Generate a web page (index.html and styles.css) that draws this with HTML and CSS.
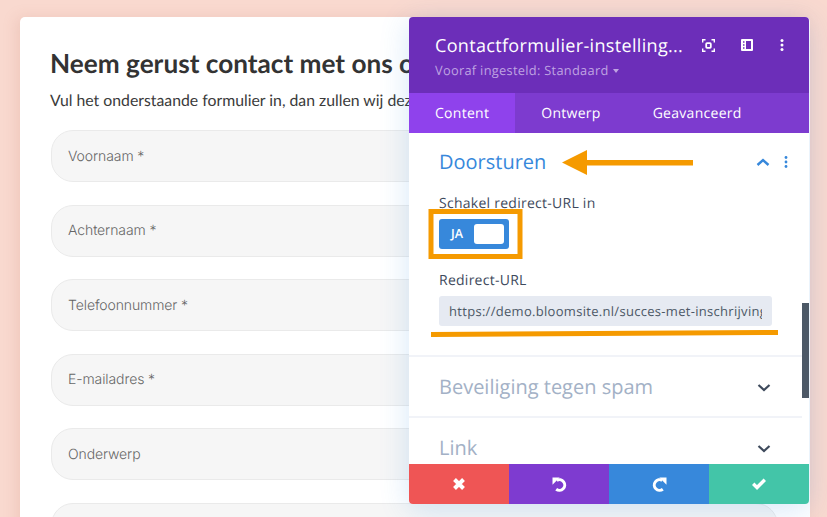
FILE: index.html
```html
<!DOCTYPE html>
<html lang="nl">
<head>
<meta charset="utf-8">
<title>Contactformulier</title>
<link rel="stylesheet" href="styles.css">
</head>
<body>
<main class="card">
  <h1 class="title">Neem gerust contact met ons op</h1>
  <p class="intro">Vul het onderstaande formulier in, dan zullen wij deze zo snel mogelijk beantwoorden.</p>
  <div class="field">Voornaam *</div>
  <div class="field">Achternaam *</div>
  <div class="field">Telefoonnummer *</div>
  <div class="field">E-mailadres *</div>
  <div class="field">Onderwerp</div>
  <div class="field"></div>
</main>

<aside class="panel">
  <header class="panel-head">
    <div class="head-text">
      <div class="head-title">Contactformulier-instelling...</div>
      <div class="head-sub">Vooraf ingesteld: Standaard <span class="caret"></span></div>
    </div>
    <div class="head-icons">
      <svg class="ico" width="13" height="13" viewBox="0 0 13 13" fill="none" stroke="#fff" stroke-width="1.4"><path d="M.7 3.500V.7h2.800M9.500.7h2.800v2.800M12.300 9.500v2.800H9.500M3.500 12.300H.7V9.500"/><rect x="4.200" y="4.200" width="4.600" height="4.600" rx=".8" stroke-width="1.800"/></svg>
      <svg class="ico" width="12" height="12" viewBox="0 0 12 12"><path fill="#fff" fill-rule="evenodd" d="M1 0h10a1 1 0 0 1 1 1v10a1 1 0 0 1-1 1H1a1 1 0 0 1-1-1V1a1 1 0 0 1 1-1zM5 2v8h5V2zM2 2.200v1.600h1.500V2.200zm0 3v1.600h1.500V5.200zm0 3v1.600h1.500V8.200z"/></svg>
      <svg class="ico" width="4" height="12" viewBox="0 0 4 12" fill="#fff"><circle cx="2" cy="1.500" r="1.500"/><circle cx="2" cy="6" r="1.500"/><circle cx="2" cy="10.500" r="1.500"/></svg>
    </div>
  </header>
  <nav class="tabs">
    <div class="tab tab-active">Content</div>
    <div class="tab">Ontwerp</div>
    <div class="tab">Geavanceerd</div>
  </nav>
  <div class="panel-body">
    <section class="section section-open">
      <div class="section-head">
        <h2 class="section-title title-active">Doorsturen</h2>
        <svg class="chev" width="14" height="14" viewBox="0 0 14 14" fill="none" stroke="#3788db" stroke-width="2.400"><path d="M1.500 10 7 5l5.500 5"/></svg>
        <svg class="dots" width="4" height="12" viewBox="0 0 4 12" fill="#3788db"><circle cx="2" cy="1.500" r="1.400"/><circle cx="2" cy="6" r="1.400"/><circle cx="2" cy="10.500" r="1.400"/></svg>
      </div>
      <div class="label label-first">Schakel redirect-URL in</div>
      <div class="toggle"><span class="toggle-text">JA</span><span class="knob"></span></div>
      <div class="label label-second">Redirect-URL</div>
      <div class="url"><span class="url-text">https://demo.bloomsite.nl/succes-met-inschrijving</span></div>
    </section>
    <section class="section">
      <div class="section-head">
        <h2 class="section-title">Beveiliging tegen spam</h2>
        <svg class="chev chev-down" width="14" height="14" viewBox="0 0 14 14" fill="none" stroke="#3e4a5c" stroke-width="2.200"><path d="M1.500 5 7 10l5.500-5"/></svg>
      </div>
    </section>
    <section class="section section-last">
      <div class="section-head">
        <h2 class="section-title">Link</h2>
        <svg class="chev chev-down" width="14" height="14" viewBox="0 0 14 14" fill="none" stroke="#3e4a5c" stroke-width="2.200"><path d="M1.500 5 7 10l5.500-5"/></svg>
      </div>
    </section>
    <div class="scrollbar"></div>
  </div>
  <footer class="actions">
    <div class="action act-red"><svg width="12" height="12" viewBox="0 0 12 12" fill="none" stroke="#fff" stroke-width="4"><path d="M1.500 1.500l9 9M10.500 1.500l-9 9"/></svg></div>
    <div class="action act-purple"><svg width="15" height="15" viewBox="0 0 15 15" fill="none"><path d="M4.800 3.400A5.300 5.300 0 1 1 4.200 12.200" stroke="#fff" stroke-width="3"/><path fill="#fff" d="M.5.500h7.200L.5 7.800z"/></svg></div>
    <div class="action act-blue"><svg width="15" height="15" viewBox="0 0 15 15" fill="none"><path d="M10.200 3.400A5.300 5.300 0 1 0 10.800 12.200" stroke="#fff" stroke-width="3"/><path fill="#fff" d="M14.500.500H7.300L14.500 7.800z"/></svg></div>
    <div class="action act-green"><svg width="14" height="12" viewBox="0 0 14 12" fill="none" stroke="#fff" stroke-width="3.400"><path d="M1.200 5.800 5 9.500l7.800-7.800"/></svg></div>
  </footer>
</aside>

<svg class="notes" width="827" height="517" viewBox="0 0 827 517" fill="none">
  <path fill="#f59a00" d="M562 162.500 587 150v10h106v5.500H587V175z"/>
  <rect x="431" y="211.500" width="89" height="45" stroke="#f59a00" stroke-width="5"/>
  <path d="M431 334.500 778 332.500" stroke="#f59a00" stroke-width="5"/>
</svg>
</body>
</html>
```

FILE: styles.css
```css
* { box-sizing: border-box; }
html, body { margin: 0; height: 100%; }
body {
  width: 827px;
  height: 517px;
  overflow: hidden;
  background: #f9d9cf;
  padding: 17px 0 0 20px;
  position: relative;
  text-rendering: geometricPrecision;
}

.card {
  width: 790px;
  height: 520px;
  background: #fff;
  border-radius: 5px 5px 0 0;
  padding: 28px 31px;
  box-shadow: -4px 0 14px rgba(200, 130, 110, 0.18);
  overflow: hidden;
}
.title {
  margin: 0 0 0 -1px;
  font: 700 26.2px/36px Lato, sans-serif;
  color: #333;
  white-space: nowrap;
}
.intro {
  margin: 7px 0 16px -1px;
  font: 400 15.8px/26px Lato, sans-serif;
  color: #3b3b3b;
  white-space: nowrap;
}
.field {
  height: 52px;
  width: 727px;
  margin-bottom: 22.6px;
  padding: 1px 0 0 16px;
  display: flex;
  align-items: center;
  background: #f6f6f6;
  border: 1px solid #eaeaea;
  border-radius: 22px;
  font: 300 14px/20px Inter, sans-serif;
  color: #666;
  letter-spacing: -0.1px;
}

.panel {
  position: absolute;
  left: 409px;
  top: 17px;
  width: 400px;
  height: 487px;
  display: flex;
  flex-direction: column;
  border-radius: 4px;
  overflow: hidden;
  background: #fff;
  box-shadow: 0 5px 30px rgba(43, 135, 218, 0.2);
  font-family: "Open Sans", sans-serif;
}
.panel-head {
  height: 76px;
  flex: none;
  background: #6c2eb9;
  padding: 16px 25.5px 0 26px;
  display: flex;
  justify-content: space-between;
}
.head-title {
  font-size: 18px;
  line-height: 26px;
  font-weight: 500;
  letter-spacing: 0.33px;
  color: #fff;
  white-space: nowrap;
}
.head-sub {
  margin-top: 2px;
  font-size: 12.8px;
  line-height: 18px;
  font-weight: 500;
  letter-spacing: 0.3px;
  color: #bfa3e2;
  white-space: nowrap;
}
.caret {
  display: inline-block;
  margin-left: 1px;
  vertical-align: 2px;
  border: 3px solid transparent;
  border-top: 4px solid #bfa3e2;
  border-bottom: 0;
}
.head-icons {
  display: flex;
  gap: 26.5px;
  padding-top: 6px;
  align-items: flex-start;
}
.ico { display: block; }

.tabs {
  height: 40px;
  flex: none;
  display: flex;
  background: #7d3bcf;
  color: #fff;
  font-size: 14px;
  font-weight: 500;
  letter-spacing: 0.28px;
}
.tab {
  padding: 0 26px;
  display: flex;
  align-items: center;
}
.tab-active { background: #8f42ec; }

.panel-body {
  flex: 1;
  min-height: 0;
  overflow: hidden;
  position: relative;
  padding-right: 7px;
}
.section {
  height: 61px;
  padding: 0 12px 0 30px;
  border-bottom: 2px solid #f1f3f8;
}
.section-open { height: 224px; }
.section-last { border-bottom: 0; }
.section-head {
  height: 60px;
  display: flex;
  align-items: center;
}
.section-open .section-head { height: 58px; }
.section-title {
  margin: 0;
  flex: 1;
  font-size: 20px;
  line-height: 28px;
  font-weight: 400;
  color: #a3b1c6;
}
.title-active { color: #3788db; }
.chev { display: block; margin-right: 6px; }
.chev-down { margin-right: 19px; }
.dots { display: block; margin-left: 8px; margin-right: 2px; }

.label {
  font-size: 14px;
  line-height: 20px;
  font-weight: 500;
  letter-spacing: 0.26px;
  color: #3e4a5c;
}
.label-first { margin-top: 3px; }
.label-second { margin-top: 22px; }
.toggle {
  margin-top: 5px;
  width: 70px;
  height: 30px;
  background: #3788db;
  border-radius: 3px;
  display: flex;
  align-items: center;
  justify-content: space-between;
  padding: 0 5px 0 12px;
}
.toggle-text {
  font-size: 12.5px;
  line-height: 16px;
  margin-top: -1px;
  font-weight: 600;
  color: #fff;
}
.knob {
  width: 30px;
  height: 20px;
  background: #fff;
  border-radius: 3px;
}
.url {
  margin-top: 5px;
  width: 333px;
  height: 30px;
  padding: 0 10px;
  background: #e6eaf2;
  border-radius: 3px;
  display: flex;
  align-items: center;
}
.url-text {
  display: block;
  overflow: hidden;
  white-space: nowrap;
  font-size: 13px;
  font-weight: 500;
  letter-spacing: 0.3px;
  color: #4c5866;
}
.scrollbar {
  position: absolute;
  right: 0;
  top: 170px;
  width: 7px;
  height: 95px;
  background: #4c5866;
}

.actions {
  height: 40px;
  flex: none;
  display: flex;
}
.action {
  flex: 1;
  display: flex;
  align-items: center;
  justify-content: center;
}
.act-red { background: #ef5555; }
.act-purple { background: #7e3bd0; }
.act-blue { background: #3788db; }
.act-green { background: #43c5a8; }

.notes {
  position: absolute;
  left: 0;
  top: 0;
  pointer-events: none;
}
```
